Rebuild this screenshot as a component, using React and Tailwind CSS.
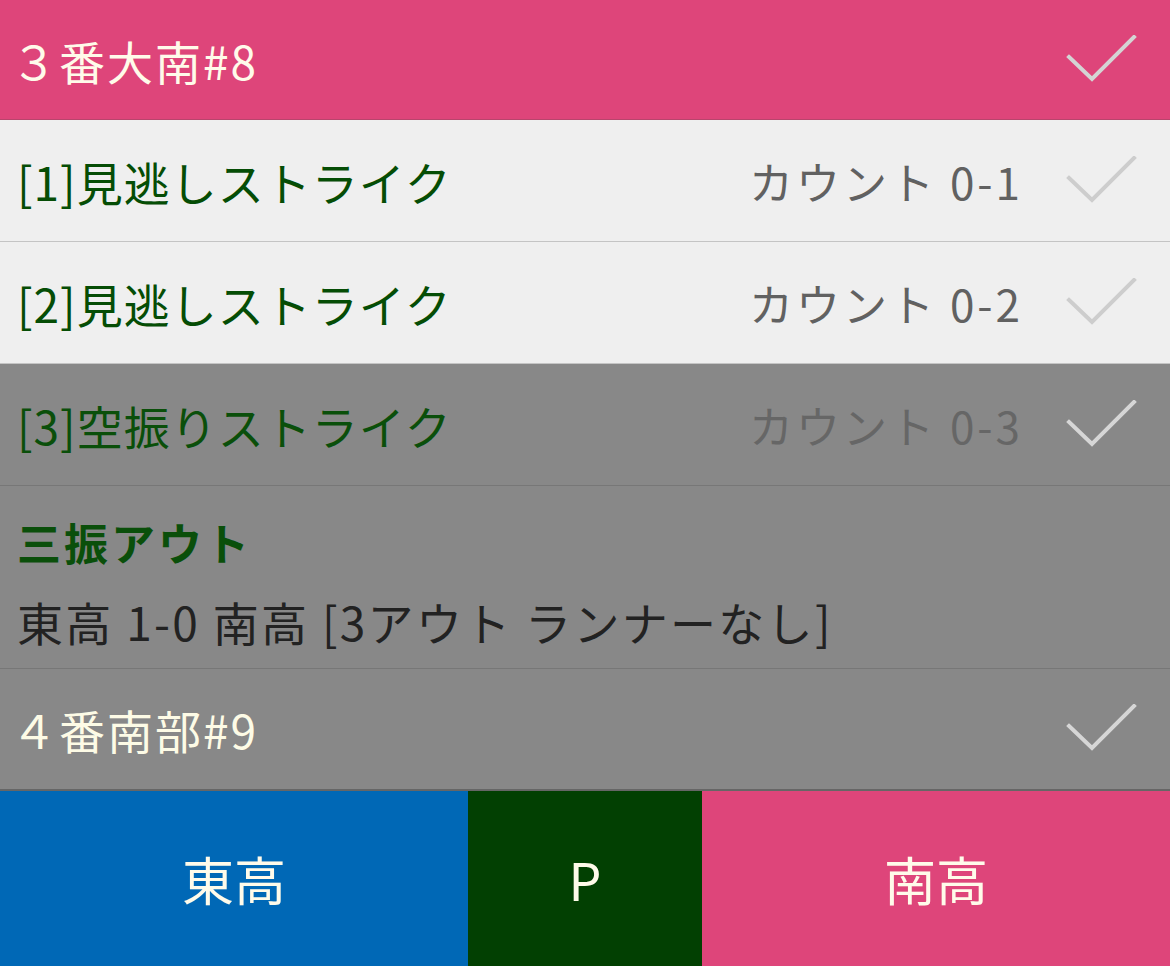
import React from "react";

const Check = ({ color }) => (
  <svg width="72" height="50" viewBox="0 0 72 50" className="shrink-0">
    <polyline
      points="3,22 26,44 68,2"
      fill="none"
      stroke={color}
      strokeWidth="4"
      strokeLinecap="square"
    />
  </svg>
);

const pitches = [
  { no: 1, label: "見逃しストライク", count: "0-1" },
  { no: 2, label: "見逃しストライク", count: "0-2" },
];

export default function App() {
  return (
    <div
      className="w-[1170px] h-[966px] flex flex-col bg-[#888888] overflow-hidden"
      style={{ fontFamily: '"Noto Sans CJK JP", "Noto Sans", sans-serif' }}
    >
      {/* batter header */}
      <div className="h-[120px] shrink-0 flex items-center justify-between bg-[#de457a] pl-[11px] pr-[32px] border-b border-[#b8456c]">
        <span className="text-[46px] tracking-[2px] text-[#fffbea] leading-none">３番大南#8</span>
        <Check color="#d4d4d4" />
      </div>

      {pitches.map((p) => (
        <div
          key={p.no}
          className="h-[122px] shrink-0 flex items-center bg-[#efefef] pl-[17px] pr-[32px] border-b border-[#c4c4c4]"
        >
          <span className="text-[46px] tracking-[1px] text-[#054d05] leading-none">
            [{p.no}]{p.label}
          </span>
          <span className="ml-auto mr-[43px] text-[44px] tracking-[3px] text-[#616161] leading-none">
            カウント {p.count}
          </span>
          <Check color="#cdcdcd" />
        </div>
      ))}

      <div className="h-[122px] shrink-0 flex items-center bg-[#888888] pl-[17px] pr-[32px] border-b border-[#777777]">
        <span className="text-[46px] tracking-[1px] text-[#0a4f0a] leading-none">[3]空振りストライク</span>
        <span className="ml-auto mr-[43px] text-[44px] tracking-[3px] text-[#666666] leading-none">
          カウント 0-3
        </span>
        <Check color="#d6d6d6" />
      </div>

      {/* result */}
      <div className="h-[183px] shrink-0 flex flex-col justify-center gap-[34px] pt-[10px] bg-[#888888] pl-[17px] pr-[32px] border-b border-[#777777]">
        <span className="text-[44px] tracking-[3px] font-bold text-[#0a4f0a] leading-none">三振アウト</span>
        <span className="text-[46px] tracking-[2.3px] text-[#222222] leading-none">
          東高 1-0 南高 [3アウト ランナーなし]
        </span>
      </div>

      <div className="h-[122px] shrink-0 flex items-center justify-between bg-[#888888] pl-[11px] pr-[32px] border-b-2 border-[#666666]">
        <span className="text-[46px] tracking-[2px] text-[#fdfbe6] leading-none">４番南部#9</span>
        <Check color="#d6d6d6" />
      </div>

      {/* bottom buttons */}
      <div className="flex-1 flex">
        <div className="w-[468px] flex items-center justify-center bg-[#0068b6] text-[52px] text-[#fffbea]">
          東高
        </div>
        <div className="w-[234px] flex items-center justify-center bg-[#024002] text-[52px] text-[#fffbea]">
          P
        </div>
        <div className="flex-1 flex items-center justify-center bg-[#de457a] text-[52px] text-[#fffbea]">
          南高
        </div>
      </div>
    </div>
  );
}
